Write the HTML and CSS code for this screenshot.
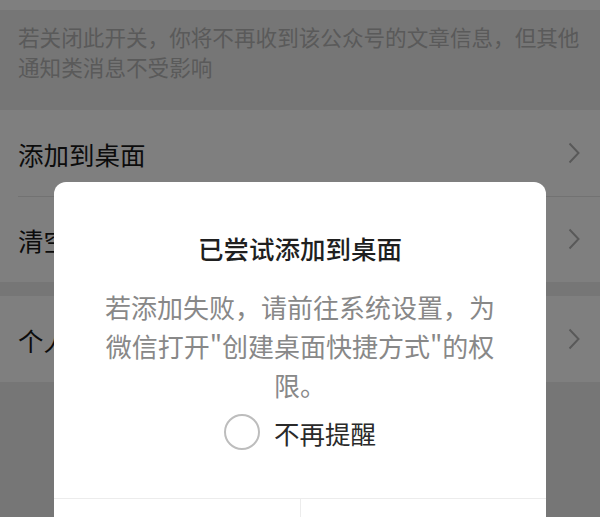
FILE: index.html
```html
<!DOCTYPE html>
<html lang="zh-CN">
<head>
  <meta charset="utf-8">
  <title>设置</title>
  <link rel="stylesheet" href="styles.css">
</head>
<body>
  <div class="page">
    <div class="group group-top"></div>
    <p class="hint">若关闭此开关，你将不再收到该公众号的文章信息，但其他通知类消息不受影响</p>

    <div class="group">
      <div class="cell">
        <span class="cell-title">添加到桌面</span>
        <svg class="arrow" width="12" height="22" viewBox="0 0 12 22"><path d="M1.5 1.5 L10.5 11 L1.5 20.5" fill="none" stroke="#b2b2b2" stroke-width="2"/></svg>
      </div>
      <div class="cell">
        <span class="cell-title">清空内容</span>
        <svg class="arrow" width="12" height="22" viewBox="0 0 12 22"><path d="M1.5 1.5 L10.5 11 L1.5 20.5" fill="none" stroke="#b2b2b2" stroke-width="2"/></svg>
      </div>
    </div>

    <div class="group">
      <div class="cell">
        <span class="cell-title">个人信息</span>
        <svg class="arrow" width="12" height="22" viewBox="0 0 12 22"><path d="M1.5 1.5 L10.5 11 L1.5 20.5" fill="none" stroke="#b2b2b2" stroke-width="2"/></svg>
      </div>
    </div>
  </div>

  <!-- modal -->
  <div class="mask"></div>
  <div class="dialog">
    <div class="dialog-body">
      <h2 class="dialog-title">已尝试添加到桌面</h2>
      <p class="dialog-text">若添加失败，请前往系统设置，为微信打开"创建桌面快捷方式"的权限。</p>
      <label class="check">
        <span class="check-circle"></span>
        <span class="check-label">不再提醒</span>
      </label>
    </div>
    <div class="dialog-foot">
      <div class="btn"><span>取消</span></div>
      <div class="btn btn-primary"><span>去设置</span></div>
    </div>
  </div>
</body>
</html>
```

FILE: styles.css
```css
html, body {
  margin: 0;
  padding: 0;
  height: 517px;
  overflow: hidden;
}
body {
  background-color: #ededed;
  font-family: "Noto Sans CJK SC", "Noto Sans", sans-serif;
  color: #191919;
  position: relative;
}
.page {
  display: flex;
  flex-direction: column;
}
.group {
  background-color: #ffffff;
}
.group-top {
  height: 10px;
}
.hint {
  margin: 0;
  height: 100px;
  box-sizing: border-box;
  padding: 12px 0 0 18px;
  font-size: 21.6px;
  line-height: 30px;
  color: #b4b4b4;
}
.group + .group {
  margin-top: 14px;
}
.cell {
  display: flex;
  align-items: center;
  justify-content: space-between;
  height: 86px;
  padding: 0 20px 0 18px;
  position: relative;
}
.cell + .cell::before {
  content: "";
  position: absolute;
  top: 0;
  left: 18px;
  right: 0;
  border-top: 1px solid #e5e5e5;
}
.cell-title {
  font-size: 25.5px;
  color: #191919;
}
.mask {
  position: absolute;
  inset: 0;
  background-color: rgba(0, 0, 0, 0.5);
}
.dialog {
  position: absolute;
  top: 182px;
  left: 54px;
  width: 492px;
  background-color: #ffffff;
  border-radius: 12px;
  overflow: hidden;
}
.dialog-body {
  padding: 48px 44px 48px 44px;
  display: flex;
  flex-direction: column;
  align-items: center;
  text-align: center;
}
.dialog-title {
  margin: 0;
  font-size: 25.5px;
  line-height: 36px;
  font-weight: 500;
  color: #1f1f1f;
}
.dialog-text {
  margin: 21px 0 0 0;
  font-size: 26px;
  line-height: 39px;
  color: #888888;
}
.check {
  margin-top: 10px;
  display: flex;
  align-items: center;
  height: 36px;
  gap: 14px;
}
.check-circle {
  width: 32px;
  height: 32px;
  border: 2px solid #bdbdbd;
  border-radius: 50%;
}
.check-label {
  font-size: 25.5px;
  color: #2a2a2a;
}
.dialog-foot {
  display: flex;
  border-top: 1px solid #ececec;
}
.btn {
  flex: 1;
  height: 110px;
  display: flex;
  align-items: center;
  justify-content: center;
  font-size: 26px;
  color: #191919;
}
.btn + .btn {
  border-left: 1px solid #ececec;
}
.btn-primary {
  color: #576b95;
  font-weight: 500;
}
```
